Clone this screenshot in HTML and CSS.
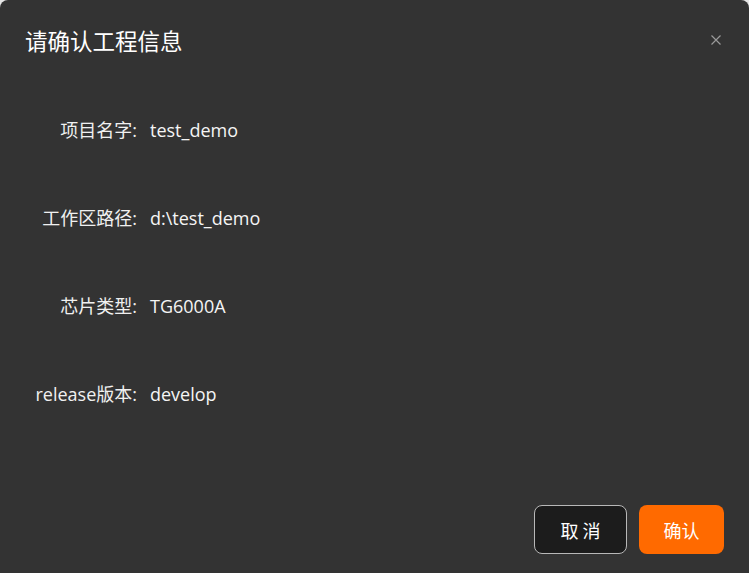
FILE: index.html
```html
<!DOCTYPE html>
<html lang="zh-CN">
<head>
    <meta charset="UTF-8">
    <meta name="viewport" content="width=device-width, initial-scale=1.0">
    <title>请确认工程信息</title>
    <link rel="stylesheet" href="styles.css">
</head>
<body>
    <div class="dialog">
        <div class="dialog-header">
            <h2 class="dialog-title">请确认工程信息</h2>
            <button class="dialog-close" aria-label="关闭">
                <svg width="12" height="12" viewBox="0 0 12 12">
                    <path d="M1.5 1.5 L10.5 10.5 M10.5 1.5 L1.5 10.5" stroke="#9a9a9a" stroke-width="1.2" fill="none"/>
                </svg>
            </button>
        </div>

        <!-- 工程信息 -->
        <div class="dialog-body">
            <div class="info-row">
                <span class="info-label">项目名字:</span>
                <span class="info-value">test_demo</span>
            </div>
            <div class="info-row">
                <span class="info-label">工作区路径:</span>
                <span class="info-value">d:\test_demo</span>
            </div>
            <div class="info-row">
                <span class="info-label">芯片类型:</span>
                <span class="info-value">TG6000A</span>
            </div>
            <div class="info-row">
                <span class="info-label">release版本:</span>
                <span class="info-value">develop</span>
            </div>
        </div>

        <div class="dialog-footer">
            <button class="btn btn-cancel">取 消</button>
            <button class="btn btn-primary">确认</button>
        </div>
    </div>
</body>
</html>
```

FILE: styles.css
```css
body {
    margin: 0;
    padding: 0;
    background-color: #e6e6e6;
    font-family: "Open Sans", "Noto Sans CJK SC", sans-serif;
    color: #fff;
}

.dialog {
    width: 749px;
    height: 573px;
    background-color: #333333;
    border-radius: 8px 8px 0 0;
    display: flex;
    flex-direction: column;
    box-sizing: border-box;
}

/* 标题栏 */
.dialog-header {
    display: flex;
    justify-content: space-between;
    align-items: flex-start;
    padding: 25px 27px 0 25px;
    height: 80px;
    box-sizing: border-box;
}

.dialog-title {
    margin: 0;
    font-size: 22.5px;
    font-weight: 400;
    line-height: 30px;
    color: #fff;
    font-family: "Noto Sans CJK SC", sans-serif;
}

.dialog-close {
    background: none;
    border: none;
    padding: 0;
    margin-top: 9px;
    width: 12px;
    height: 12px;
    cursor: pointer;
    display: flex;
}

/* 表单内容 */
.dialog-body {
    flex: 1;
    padding-top: 38px;
    display: flex;
    flex-direction: column;
    gap: 64px;
}

.info-row {
    display: grid;
    grid-template-columns: 137px 1fr;
    column-gap: 13px;
    font-size: 18px;
    line-height: 24px;
}

.info-label {
    text-align: right;
    color: #f0f0f0;
}

.info-value {
    color: #f5f5f5;
}

/* 底部按钮 */
.dialog-footer {
    display: flex;
    justify-content: flex-end;
    gap: 12px;
    padding: 0 25px 19px 0;
}

.btn {
    height: 49px;
    border-radius: 8px;
    font-size: 18px;
    font-family: "Noto Sans CJK SC", sans-serif;
    color: #fff;
    cursor: pointer;
    box-sizing: border-box;
}

.btn-cancel {
    width: 93px;
    background-color: #1c1c1c;
    border: 1px solid #b8b8b8;
}

.btn-primary {
    width: 85px;
    background-color: #ff6a00;
    border: none;
}
```
